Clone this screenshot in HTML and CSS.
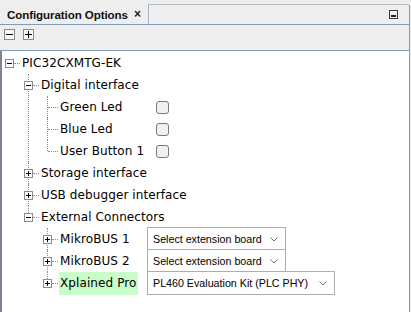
FILE: index.html
```html
<!DOCTYPE html>
<html lang="en">
<head>
    <meta charset="UTF-8">
    <title>Configuration Options</title>
    <link rel="stylesheet" href="styles.css">
</head>
<body>
    <div class="panel">
        <div class="tabbar">
            <div class="tab">
                <span class="tab-title">Configuration Options</span>
                <span class="tab-close">&times;</span>
            </div>
            <div class="tab-fill">
                <svg class="minimize" width="9" height="9" viewBox="0 0 9 9">
                    <rect x="0.5" y="0.5" width="8" height="8" fill="#f4f4f4" stroke="#3a3a3a"/>
                    <rect x="2" y="5" width="5" height="2" fill="#222"/>
                </svg>
            </div>
        </div>

        <div class="toolbar">
            <span class="tool tool-minus" title="Collapse all"></span>
            <span class="tool tool-plus" title="Expand all"></span>
        </div>

        <div class="tree">
            <ul class="nodes root">
                <li>
                    <div class="row">
                        <span class="exp open"></span><span class="stub"></span>
                        <span class="label">PIC32CXMTG-EK</span>
                    </div>
                    <ul class="nodes">
                        <li>
                            <div class="row">
                                <span class="exp open"></span><span class="stub"></span>
                                <span class="label">Digital interface</span>
                            </div>
                            <ul class="nodes">
                                <li>
                                    <div class="row">
                                        <span class="leaf-stub"></span>
                                        <span class="label fixed">Green Led</span>
                                        <input type="checkbox" class="check">
                                    </div>
                                </li>
                                <li>
                                    <div class="row">
                                        <span class="leaf-stub"></span>
                                        <span class="label fixed">Blue Led</span>
                                        <input type="checkbox" class="check">
                                    </div>
                                </li>
                                <li>
                                    <div class="row">
                                        <span class="leaf-stub"></span>
                                        <span class="label fixed">User Button 1</span>
                                        <input type="checkbox" class="check">
                                    </div>
                                </li>
                            </ul>
                        </li>
                        <li>
                            <div class="row">
                                <span class="exp"></span><span class="stub"></span>
                                <span class="label">Storage interface</span>
                            </div>
                        </li>
                        <li>
                            <div class="row">
                                <span class="exp"></span><span class="stub"></span>
                                <span class="label">USB debugger interface</span>
                            </div>
                        </li>
                        <li>
                            <div class="row">
                                <span class="exp open"></span><span class="stub"></span>
                                <span class="label">External Connectors</span>
                            </div>
                            <ul class="nodes">
                                <li>
                                    <div class="row">
                                        <span class="exp"></span><span class="stub"></span>
                                        <span class="label fixed">MikroBUS 1</span>
                                        <div class="select short">
                                            <span>Select extension board</span>
                                            <svg class="chevron" width="8" height="5" viewBox="0 0 8 5"><path d="M0.5 0.5 L4 4 L7.5 0.5" fill="none" stroke="#707070"/></svg>
                                        </div>
                                    </div>
                                </li>
                                <li>
                                    <div class="row">
                                        <span class="exp"></span><span class="stub"></span>
                                        <span class="label fixed">MikroBUS 2</span>
                                        <div class="select short">
                                            <span>Select extension board</span>
                                            <svg class="chevron" width="8" height="5" viewBox="0 0 8 5"><path d="M0.5 0.5 L4 4 L7.5 0.5" fill="none" stroke="#707070"/></svg>
                                        </div>
                                    </div>
                                </li>
                                <li>
                                    <div class="row">
                                        <span class="exp"></span><span class="stub"></span>
                                        <span class="label fixed"><span class="highlight">Xplained Pro</span></span>
                                        <div class="select wide">
                                            <span>PL460 Evaluation Kit (PLC PHY)</span>
                                            <svg class="chevron" width="8" height="5" viewBox="0 0 8 5"><path d="M0.5 0.5 L4 4 L7.5 0.5" fill="none" stroke="#707070"/></svg>
                                        </div>
                                    </div>
                                </li>
                            </ul>
                        </li>
                    </ul>
                </li>
            </ul>
        </div>
    </div>
</body>
</html>
```

FILE: styles.css
```css
* {
    margin: 0;
    padding: 0;
    box-sizing: border-box;
}

body {
    width: 411px;
    height: 312px;
    overflow: hidden;
    background: #eeeeee;
    font-family: "DejaVu Sans", sans-serif;
    font-size: 12px;
    color: #000;
}

.panel {
    width: 410px;
    height: 312px;
    display: flex;
    flex-direction: column;
}

/* tab strip */
.tabbar {
    height: 25px;
    display: flex;
    align-items: flex-end;
    padding-top: 5px;
    border-bottom: 1px solid #7f9cbb;
}

.tab {
    flex: none;
    width: 149px;
    height: 20px;
    display: flex;
    align-items: center;
    padding-left: 7px;
    white-space: nowrap;
    border-right: 1px solid #a9b6c4;
}

.tab-title {
    font: bold 11.6px "Liberation Sans", sans-serif;
    letter-spacing: -0.1px;
    color: #111;
}

.tab-close {
    margin-left: 6px;
    font: bold 12px "Liberation Sans", sans-serif;
    color: #222;
}

.tab-fill {
    flex: 1;
    height: 20px;
    display: flex;
    justify-content: flex-end;
    align-items: center;
    padding-right: 11px;
    border-top: 1px solid #b4bcc6;
    border-right: 1px solid #7f9cbb;
    border-top-right-radius: 3px;
}

/* toolbar */
.toolbar {
    height: 26px;
    display: flex;
    align-items: flex-start;
    gap: 8px;
    padding: 4px 0 0 4px;
    border-right: 1px solid #7f9cbb;
    border-bottom: 1px solid #7f9cbb;
}

.tool {
    width: 11px;
    height: 11px;
    border: 1px solid #8a8a8a;
    background: linear-gradient(#000, #000) center / 7px 1px no-repeat, #f8f8f8;
}

.tool-plus {
    background: linear-gradient(#000, #000) center / 7px 1px no-repeat,
                linear-gradient(#000, #000) center / 1px 7px no-repeat, #f8f8f8;
}

/* tree */
.tree {
    flex: 1;
    background: #fff;
    border-left: 2px solid #7d8593;
    border-right: 1px solid #7f9cbb;
    padding: 1px 0 0 3px;
}

.nodes {
    list-style: none;
}

.nodes .nodes {
    margin-left: 19px;
}

.nodes .nodes > li {
    position: relative;
}

.nodes .nodes > li::before {
    content: "";
    position: absolute;
    left: 4px;
    top: 0;
    bottom: 0;
    border-left: 1px dotted #8c8c8c;
}

.nodes .nodes > li:last-child::before {
    bottom: auto;
    height: 11px;
}

.row {
    height: 22px;
    display: flex;
    align-items: center;
}

.exp {
    position: relative;
    z-index: 1;
    flex: none;
    width: 9px;
    height: 9px;
    border: 1px solid #8c8c8c;
    background: linear-gradient(#000, #000) center / 5px 1px no-repeat,
                linear-gradient(#000, #000) center / 1px 5px no-repeat, #fff;
}

.exp.open {
    background: linear-gradient(#000, #000) center / 5px 1px no-repeat, #fff;
}

.stub {
    flex: none;
    width: 6px;
    border-top: 1px dotted #8c8c8c;
}

.leaf-stub {
    flex: none;
    width: 10px;
    margin-left: 5px;
    border-top: 1px dotted #8c8c8c;
}

.label {
    margin-left: 2px;
    white-space: nowrap;
    letter-spacing: 0.1px;
}

.label.fixed {
    width: 87px;
    flex: none;
}

.highlight {
    display: inline-block;
    height: 23px;
    line-height: 23px;
    width: 79px;
    margin-left: -1px;
    padding-left: 1px;
    background: #c8fcc8;
}

.check {
    appearance: none;
    width: 13px;
    height: 13px;
    margin-left: 9px;
    border: 1px solid #7a7a7a;
    border-radius: 3px;
    background: #f0f0f0;
}

.select {
    flex: none;
    height: 24px;
    margin: -1px 0;
    display: flex;
    align-items: center;
    justify-content: space-between;
    padding: 0 7px 0 5px;
    background: #fff;
    border: 1px solid #adadad;
    font: 10.7px "Liberation Sans", sans-serif;
    white-space: nowrap;
    color: #000;
}

.select.short {
    width: 139px;
}

.select.wide {
    width: 188px;
}
```
